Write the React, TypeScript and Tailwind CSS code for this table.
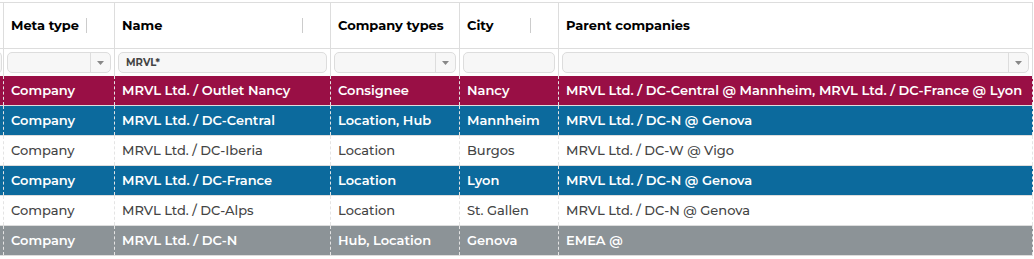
import React from "react";

interface Row {
  metaType: string;
  name: string;
  types: string;
  city: string;
  parents: string;
  tone: "magenta" | "blue" | "white" | "gray";
}

const rows: Row[] = [
  {
    metaType: "Company",
    name: "MRVL Ltd. / Outlet Nancy",
    types: "Consignee",
    city: "Nancy",
    parents: "MRVL Ltd. / DC-Central @ Mannheim, MRVL Ltd. / DC-France @ Lyon",
    tone: "magenta",
  },
  {
    metaType: "Company",
    name: "MRVL Ltd. / DC-Central",
    types: "Location, Hub",
    city: "Mannheim",
    parents: "MRVL Ltd. / DC-N @ Genova",
    tone: "blue",
  },
  {
    metaType: "Company",
    name: "MRVL Ltd. / DC-Iberia",
    types: "Location",
    city: "Burgos",
    parents: "MRVL Ltd. / DC-W @ Vigo",
    tone: "white",
  },
  {
    metaType: "Company",
    name: "MRVL Ltd. / DC-France",
    types: "Location",
    city: "Lyon",
    parents: "MRVL Ltd. / DC-N @ Genova",
    tone: "blue",
  },
  {
    metaType: "Company",
    name: "MRVL Ltd. / DC-Alps",
    types: "Location",
    city: "St. Gallen",
    parents: "MRVL Ltd. / DC-N @ Genova",
    tone: "white",
  },
  {
    metaType: "Company",
    name: "MRVL Ltd. / DC-N",
    types: "Hub, Location",
    city: "Genova",
    parents: "EMEA @",
    tone: "gray",
  },
];

const toneClass = {
  magenta: "bg-[#990f45] text-white font-semibold",
  blue: "bg-[#0c6a9d] text-white font-semibold",
  white: "bg-white text-[#444] font-medium",
  gray: "bg-[#8c9397] text-white font-semibold",
};

// column widths, first one is the scrolled-off column
const cols = ["w-[4px]", "w-[111px]", "w-[216px]", "w-[129px]", "w-[99px]", "flex-1"];

const Caret = () => (
  <div className="flex h-full w-[20px] items-center justify-center border-l border-[#ddd]">
    <svg width="7" height="4" viewBox="0 0 7 4">
      <path d="M0 0h7L3.5 4z" fill="#888" />
    </svg>
  </div>
);

const FilterBox = ({ value, select }: { value?: string; select?: boolean }) => (
  <div className="mx-[2px] flex h-[21px] flex-1 items-center rounded-[5px] border border-[#ddd] bg-[#f7f7f7]">
    <div className="flex-1 truncate px-[7px] text-[10px] font-bold text-[#444]">{value}</div>
    {select && <Caret />}
  </div>
);

const HeaderCell = ({ label, width, sep }: { label: string; width: string; sep?: boolean }) => (
  <div className={`${width} flex items-center border-r border-[#ddd] pl-[7px]`}>
    <span className="flex-1 text-[13px] font-bold text-black">{label}</span>
    {sep && <span className="mr-[27px] h-[15px] w-px bg-[#ccc]" />}
  </div>
);

export default function App() {
  return (
    <div
      className="h-[259px] w-[1034px] overflow-hidden bg-white pt-[2px]"
      style={{ fontFamily: "Montserrat, Inter, 'Open Sans', sans-serif" }}
    >
      <div className="w-[1033px] border-t border-[#ddd]">
        {/* header */}
        <div className="flex h-[46px] border-b border-[#ddd]">
          <div className={`${cols[0]} border-r border-[#ddd]`} />
          <HeaderCell label="Meta type" width={cols[1]} sep />
          <HeaderCell label="Name" width={cols[2]} sep />
          <HeaderCell label="Company types" width={cols[3]} />
          <HeaderCell label="City" width={cols[4]} sep />
          <HeaderCell label="Parent companies" width={cols[5]} />
        </div>

        {/* filters */}
        <div className="flex h-[27px] items-center">
          <div className={`${cols[0]} flex h-full items-center border-r border-[#ddd]`}>
            <div className="-ml-[6px] h-[21px] w-[8px] rounded-[5px] border border-[#ddd] bg-[#f7f7f7]" />
          </div>
          <div className={`${cols[1]} flex h-full items-center border-r border-[#ddd] px-px`}>
            <FilterBox select />
          </div>
          <div className={`${cols[2]} flex h-full items-center border-r border-[#ddd] px-px`}>
            <FilterBox value="MRVL*" />
          </div>
          <div className={`${cols[3]} flex h-full items-center border-r border-[#ddd] px-px`}>
            <FilterBox select />
          </div>
          <div className={`${cols[4]} flex h-full items-center border-r border-[#ddd] px-px`}>
            <FilterBox />
          </div>
          <div className={`${cols[5]} flex h-full items-center border-r border-[#ddd] px-px`}>
            <FilterBox select />
          </div>
        </div>

        {/* rows */}
        {rows.map((r, i) => (
          <div key={i} className={`flex h-[30px] border-b border-[#ddd] text-[13px] ${toneClass[r.tone]}`}>
            <div className={`${cols[0]} border-r border-dashed border-[#e4e4e4]`} />
            {[r.metaType, r.name, r.types, r.city, r.parents].map((v, j) => (
              <div
                key={j}
                className={`${cols[j + 1]} flex items-center truncate border-r border-dashed border-[#e4e4e4] px-[7px]`}
              >
                {v}
              </div>
            ))}
          </div>
        ))}
      </div>
    </div>
  );
}
